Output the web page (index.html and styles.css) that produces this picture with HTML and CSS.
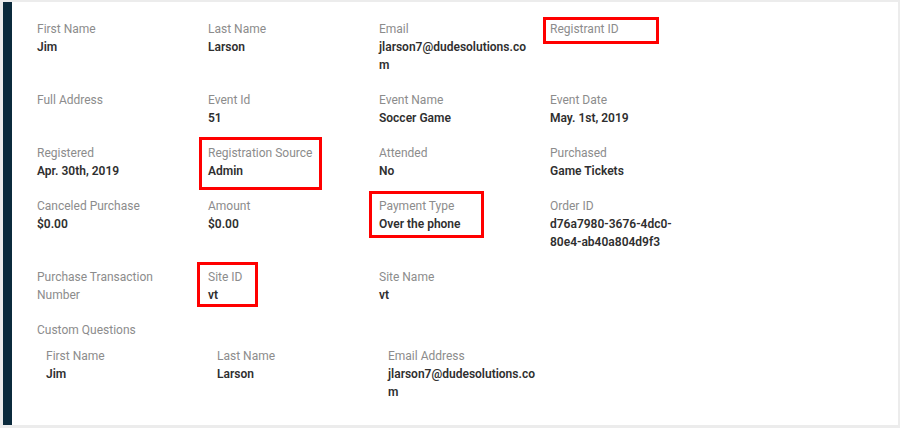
FILE: index.html
```html
<!DOCTYPE html>
<html lang="en">
<head>
    <meta charset="UTF-8">
    <meta name="viewport" content="width=device-width, initial-scale=1.0">
    <title>Registrant Details</title>
    <link rel="stylesheet" href="styles.css">
</head>
<body>
    <div class="card">
        <div class="fields">
            <div class="field">
                <div class="label">First Name</div>
                <div class="value">Jim</div>
            </div>
            <div class="field">
                <div class="label">Last Name</div>
                <div class="value">Larson</div>
            </div>
            <div class="field">
                <div class="label">Email</div>
                <div class="value">jlarson7@dudesolutions.com</div>
            </div>
            <div class="field marked mark-registrant">
                <div class="label">Registrant ID</div>
                <div class="value"></div>
            </div>

            <div class="field">
                <div class="label">Full Address</div>
                <div class="value"></div>
            </div>
            <div class="field">
                <div class="label">Event Id</div>
                <div class="value">51</div>
            </div>
            <div class="field">
                <div class="label">Event Name</div>
                <div class="value">Soccer Game</div>
            </div>
            <div class="field">
                <div class="label">Event Date</div>
                <div class="value">May. 1st, 2019</div>
            </div>

            <div class="field">
                <div class="label">Registered</div>
                <div class="value">Apr. 30th, 2019</div>
            </div>
            <div class="field marked mark-source">
                <div class="label">Registration Source</div>
                <div class="value">Admin</div>
            </div>
            <div class="field">
                <div class="label">Attended</div>
                <div class="value">No</div>
            </div>
            <div class="field">
                <div class="label">Purchased</div>
                <div class="value">Game Tickets</div>
            </div>

            <div class="field">
                <div class="label">Canceled Purchase</div>
                <div class="value">$0.00</div>
            </div>
            <div class="field">
                <div class="label">Amount</div>
                <div class="value">$0.00</div>
            </div>
            <div class="field marked mark-payment">
                <div class="label">Payment Type</div>
                <div class="value">Over the phone</div>
            </div>
            <div class="field">
                <div class="label">Order ID</div>
                <div class="value">d76a7980-3676-4dc0-<br>80e4-ab40a804d9f3</div>
            </div>

            <div class="field">
                <div class="label">Purchase Transaction Number</div>
                <div class="value"></div>
            </div>
            <div class="field marked mark-site">
                <div class="label">Site ID</div>
                <div class="value">vt</div>
            </div>
            <div class="field">
                <div class="label">Site Name</div>
                <div class="value">vt</div>
            </div>
        </div>

        <div class="custom">
            <div class="label">Custom Questions</div>
            <div class="fields custom-fields">
                <div class="field">
                    <div class="label">First Name</div>
                    <div class="value">Jim</div>
                </div>
                <div class="field">
                    <div class="label">Last Name</div>
                    <div class="value">Larson</div>
                </div>
                <div class="field">
                    <div class="label">Email Address</div>
                    <div class="value">jlarson7@dudesolutions.com</div>
                </div>
            </div>
        </div>
    </div>
</body>
</html>
```

FILE: styles.css
```css
body {
    font-family: Roboto, "Liberation Sans", Arial, sans-serif;
    font-size: 12px;
    line-height: 18px;
    margin: 0;
    padding: 2px 2px 3px 3px;
    background-color: #ececec;
}
.card {
    height: 423px;
    box-sizing: border-box;
    background-color: white;
    border-left: 9px solid #0b2a3c;
    padding: 18px 0 0 25px;
}
.fields {
    display: grid;
    grid-template-columns: repeat(4, 171px);
    row-gap: 17px;
}
.field {
    position: relative;
    width: 156px;
}
.label {
    color: #8c8c8c;
}
.value {
    color: #2f2f2f;
    font-weight: 600;
    overflow-wrap: anywhere;
}
.fields > .field:nth-child(-n+4) .value:empty {
    min-height: 18px;
}

/* red annotation frames */
.marked::after {
    content: "";
    position: absolute;
    border: 3px solid #f00;
    box-sizing: border-box;
}
.mark-registrant::after {
    left: -7px;
    top: -3px;
    width: 116px;
    height: 27px;
}
.mark-source::after {
    left: -9px;
    top: -7px;
    width: 123px;
    height: 53px;
}
.mark-payment::after {
    left: -10px;
    top: -6px;
    width: 115px;
    height: 47px;
}
.mark-site::after {
    left: -11px;
    top: -6px;
    width: 61px;
    height: 45px;
}

.custom {
    margin-top: 17px;
}
.custom-fields {
    margin-top: 8px;
    padding-left: 9px;
}
```
